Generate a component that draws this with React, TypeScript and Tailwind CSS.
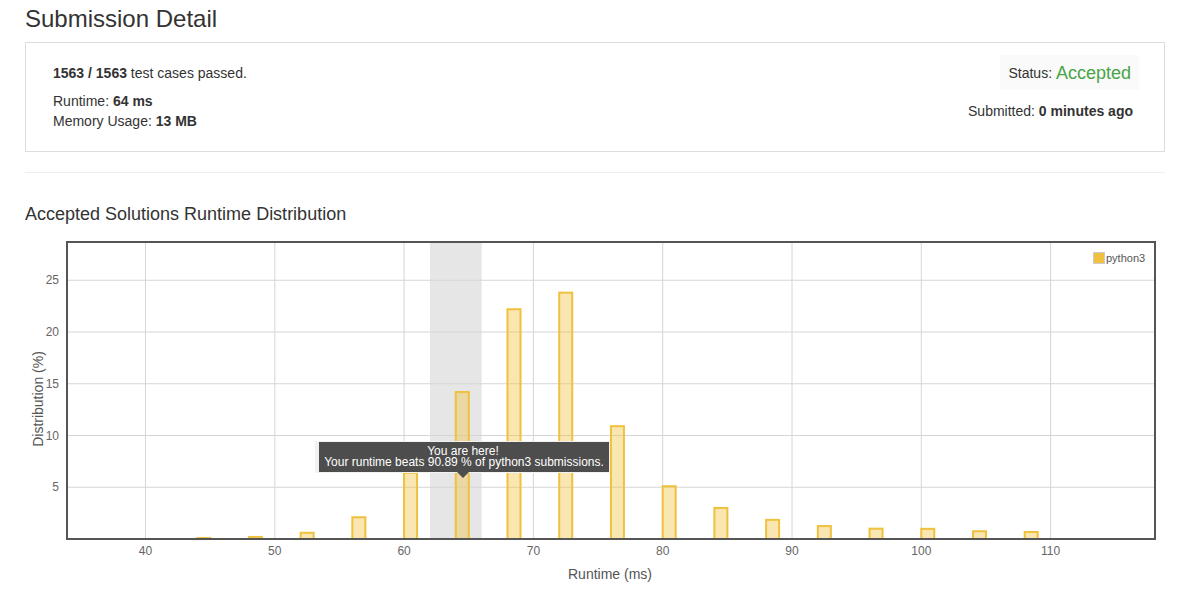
import React from "react";

const bars = [
  { v: 44, h: 0.1 },
  { v: 48, h: 0.2 },
  { v: 52, h: 0.6 },
  { v: 56, h: 2.1 },
  { v: 60, h: 6.4 },
  { v: 64, h: 14.2 },
  { v: 68, h: 22.2 },
  { v: 72, h: 23.8 },
  { v: 76, h: 10.9 },
  { v: 80, h: 5.1 },
  { v: 84, h: 3.0 },
  { v: 88, h: 1.85 },
  { v: 92, h: 1.25 },
  { v: 96, h: 1.0 },
  { v: 100, h: 0.98 },
  { v: 104, h: 0.75 },
  { v: 108, h: 0.68 },
];

const xTicks = [40, 50, 60, 70, 80, 90, 100, 110];
const yTicks = [5, 10, 15, 20, 25];

// plot frame in svg coords
const L = 42;
const T = 9;
const R = 1130;
const B = 306;

const sx = (v: number) => 120.5 + (v - 40) * 12.93;
const sy = (v: number) => B - v * 10.35;

function RuntimeChart() {
  return (
    <svg width={1140} height={360} className="block" style={{ fontFamily: '"Liberation Sans", Arial, sans-serif' }}>
      <rect x={L} y={T} width={R - L} height={B - T} fill="#fff" />
      {/* highlight band */}
      <rect x={sx(62)} y={T} width={sx(66) - sx(62)} height={B - T} fill="#e6e6e6" />
      {xTicks.map((t) => (
        <line key={"gx" + t} x1={sx(t)} x2={sx(t)} y1={T} y2={B} stroke="#d6d6d6" strokeWidth={1} />
      ))}
      {yTicks.map((t) => (
        <line key={"gy" + t} x1={L} x2={R} y1={sy(t)} y2={sy(t)} stroke="#d6d6d6" strokeWidth={1} />
      ))}
      {bars.map((b) => {
        const cx = sx(b.v + 0.5);
        const top = sy(b.h);
        return (
          <rect
            key={b.v}
            x={cx - 6.5}
            y={top}
            width={13}
            height={B - top}
            fill="rgba(240,193,60,0.4)"
            stroke="#efc13e"
            strokeWidth={2}
          />
        );
      })}
      <rect x={L} y={T} width={R - L} height={B - T} fill="none" stroke="#555" strokeWidth={2} />
      {yTicks.map((t) => (
        <text key={"ly" + t} x={34} y={sy(t) + 4} textAnchor="end" fontSize={12} fill="#666">
          {t}
        </text>
      ))}
      {xTicks.map((t) => (
        <text key={"lx" + t} x={sx(t)} y={322} textAnchor="middle" fontSize={12} fill="#666">
          {t}
        </text>
      ))}
      <text x={585} y={346} textAnchor="middle" fontSize={14} fill="#555">
        Runtime (ms)
      </text>
      <text x={18} y={166} textAnchor="middle" fontSize={14} fill="#555" transform="rotate(-90 18 166)">
        Distribution (%)
      </text>
      {/* legend */}
      <rect x={1068.5} y={19.5} width={11} height={11} fill="#efc13e" stroke="#ccc" strokeWidth={1} />
      <text x={1081} y={29} fontSize={11} fill="#545454">
        python3
      </text>
      {/* tooltip */}
      <rect x={290} y={208} width={295} height={32} fill="#f2f2f2" />
      <rect x={294} y={209} width={290} height={30} fill="#4d4d4d" />
      <polygon points="432,239 444,239 438,245" fill="#4d4d4d" />
      <text x={438} y={222} textAnchor="middle" fontSize={12} fill="#fff">
        You are here!
      </text>
      <text x={439} y={233} textAnchor="middle" fontSize={12} fill="#fff">
        Your runtime beats 90.89 % of python3 submissions.
      </text>
    </svg>
  );
}

export default function App() {
  return (
    <div
      className="min-h-[592px] w-[1202px] bg-white px-[25px] text-[14px] leading-[20px] text-[#333]"
      style={{ fontFamily: '"Liberation Sans", Arial, sans-serif' }}
    >
      <h1 className="pt-[6px] text-[24px] leading-[26px]">Submission Detail</h1>

      <div className="mt-[10px] flex h-[110px] w-[1140px] justify-between border border-[#ddd] pl-[27px] pr-[25px] pt-[12px]">
        <div className="pt-[8px]">
          <div>
            <b>1563 / 1563</b> test cases passed.
          </div>
          <div className="mt-[8px]">
            Runtime: <b>64 ms</b>
          </div>
          <div>
            Memory Usage: <b>13 MB</b>
          </div>
        </div>
        <div className="flex flex-col items-end">
          <div className="flex h-[35px] items-center bg-[#fafafa] px-[8px]">
            Status:&nbsp;<span className="text-[18px] text-[#47a447]">Accepted</span>
          </div>
          <div className="mt-[11px] pr-[6px]">
            Submitted: <b>0 minutes ago</b>
          </div>
        </div>
      </div>

      <div className="mt-[20px] w-[1140px] border-t border-[#eee]" />

      <h3 className="mt-[31px] text-[18px] leading-[20px]">Accepted Solutions Runtime Distribution</h3>

      <div className="mt-[9px]">
        <RuntimeChart />
      </div>
    </div>
  );
}
